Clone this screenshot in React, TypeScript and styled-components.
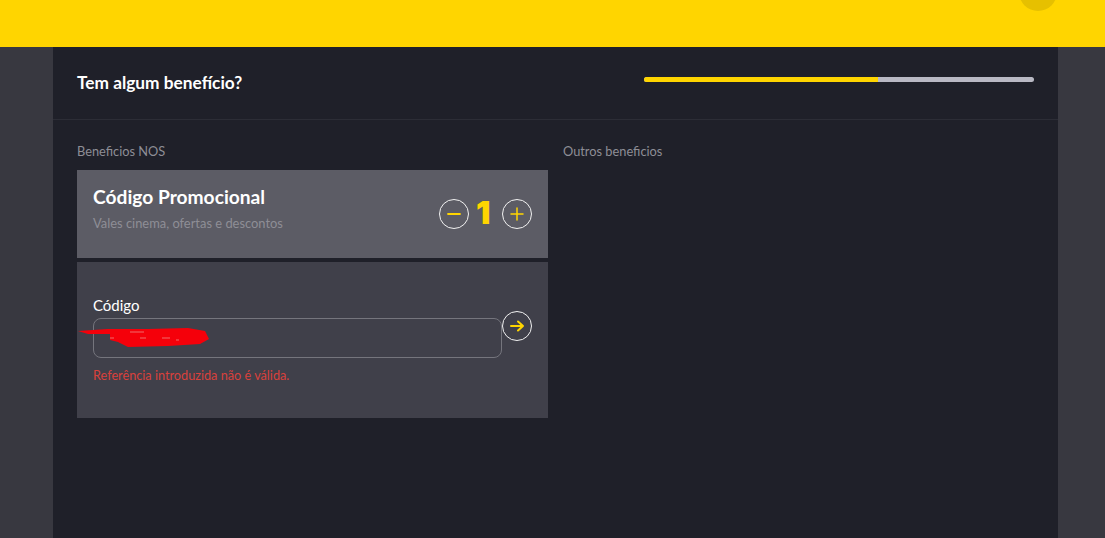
import React from "react";
import styled, { createGlobalStyle } from "styled-components";

const GlobalStyle = createGlobalStyle`
  html, body {
    margin: 0;
    height: 100%;
    background: #383840;
    font-family: "Lato", "Liberation Sans", sans-serif;
    overflow: hidden;
  }
`;

const TopBar = styled.header`
  position: relative;
  height: 47px;
  background: #ffd500;
  overflow: hidden;
`;

const Avatar = styled.div`
  position: absolute;
  top: -27px;
  left: 1019px;
  width: 38px;
  height: 38px;
  border-radius: 50%;
  background: #e6c000;
`;

const Main = styled.main`
  width: 1005px;
  height: 491px;
  margin-left: 53px;
  background: #1f2029;
`;

const StepHeader = styled.div`
  display: flex;
  align-items: center;
  justify-content: space-between;
  height: 72px;
  padding: 0 24px;
  border-bottom: 1px solid #2c2d36;
`;

const Title = styled.h1`
  margin: 0 0 1px;
  font-size: 17.3px;
  font-weight: 700;
  color: #fff;
`;

const Progress = styled.div`
  width: 390px;
  height: 5px;
  margin-bottom: 8px;
  border-radius: 3px;
  background: #b9b9c4;
  overflow: hidden;
`;

const ProgressFill = styled.div`
  width: 60%;
  height: 100%;
  background: #ffd500;
`;

const Columns = styled.div`
  display: grid;
  grid-template-columns: 471px 1fr;
  column-gap: 15px;
  padding: 23px 24px 0;
`;

const ColumnLabel = styled.div`
  height: 27px;
  font-size: 12.8px;
  line-height: 16px;
  color: #8e8e96;
`;

const PromoCard = styled.div`
  display: flex;
  align-items: center;
  justify-content: space-between;
  height: 88px;
  padding: 0 16px;
  margin-bottom: 4px;
  background: #5c5c65;
`;

const PromoText = styled.div`
  margin-bottom: 12px;
`;

const PromoName = styled.div`
  font-size: 19.2px;
  font-weight: 700;
  line-height: 22px;
  color: #fff;
`;

const PromoHint = styled.div`
  margin-top: 7px;
  font-size: 12.9px;
  line-height: 16px;
  color: #8e8e96;
`;

const Stepper = styled.div`
  display: flex;
  align-items: center;
  gap: 7px;
`;

const Count = styled.span`
  width: 19px;
  margin-top: -3px;
  font-family: "Inter", "Liberation Sans", sans-serif;
  font-size: 32px;
  font-weight: 900;
  line-height: 32px;
  text-align: left;
  color: #ffd500;
`;

const RoundButton = styled.button`
  display: flex;
  align-items: center;
  justify-content: center;
  flex: none;
  width: 30px;
  height: 30px;
  padding: 0;
  border: 1px solid #f2f2f2;
  border-radius: 50%;
  background: transparent;
`;

const CodePanel = styled.div`
  height: 156px;
  padding: 34px 16px 0;
  box-sizing: border-box;
  background: #40404a;
`;

const FieldLabel = styled.label`
  display: block;
  height: 22px;
  font-size: 15px;
  line-height: 18px;
  color: #fff;
`;

const FieldRow = styled.div`
  display: flex;
  align-items: flex-start;
`;

const Field = styled.div`
  position: relative;
  width: 409px;
  height: 40px;
  box-sizing: border-box;
  border: 1px solid #75757d;
  border-radius: 8px;
`;

const SubmitButton = styled(RoundButton)`
  margin-top: -7px;
`;

const Scribble = styled.svg`
  position: absolute;
  left: -16px;
  top: 7px;
`;

const ErrorText = styled.div`
  margin-top: 9px;
  font-size: 12.7px;
  line-height: 16px;
  color: #d9413c;
`;

const Icon: React.FC<{ d: string; weight?: number }> = ({ d, weight = 2 }) => (
  <svg width="16" height="16" viewBox="0 0 16 16" fill="none" stroke="#ffd500" strokeWidth={weight} strokeLinecap="round" strokeLinejoin="round">
    <path d={d} />
  </svg>
);

export default function App() {
  return (
    <>
      <GlobalStyle />
      <TopBar>
        <Avatar />
      </TopBar>
      <Main>
        <StepHeader>
          <Title>Tem algum benefício?</Title>
          <Progress>
            <ProgressFill />
          </Progress>
        </StepHeader>
        <Columns>
          <div>
            <ColumnLabel>Beneficios NOS</ColumnLabel>
            <PromoCard>
              <PromoText>
                <PromoName>Código Promocional</PromoName>
                <PromoHint>Vales cinema, ofertas e descontos</PromoHint>
              </PromoText>
              <Stepper>
                <RoundButton aria-label="Diminuir">
                  <Icon d="M2 8h12" weight={1.8} />
                </RoundButton>
                <Count>1</Count>
                <RoundButton aria-label="Aumentar">
                  <Icon d="M2 8h12M8 2v12" weight={1.5} />
                </RoundButton>
              </Stepper>
            </PromoCard>
            <CodePanel>
              <FieldLabel>Código</FieldLabel>
              <FieldRow>
                <Field>
                  <Scribble width="134" height="24" viewBox="0 0 134 24">
                    <path
                      d="M0 5 L30 3 L70 3 L110 2 L127 5 L131 13 L122 18 L90 20 L50 21 L40 16 L32 14 L32 8 L10 8 Z"
                      fill="#f5000a"
                    />
                    <path d="M32 12h4M52 6h14M62 12h6M84 12h8M98 14h3" stroke="#f06a6a" strokeWidth="1" fill="none" />
                  </Scribble>
                </Field>
                <SubmitButton aria-label="Validar">
                  <Icon d="M2 8h12M9 3.5L14 8l-5 4.5" />
                </SubmitButton>
              </FieldRow>
              <ErrorText>Referência introduzida não é válida.</ErrorText>
            </CodePanel>
          </div>
          <div>
            <ColumnLabel>Outros beneficios</ColumnLabel>
          </div>
        </Columns>
      </Main>
    </>
  );
}
